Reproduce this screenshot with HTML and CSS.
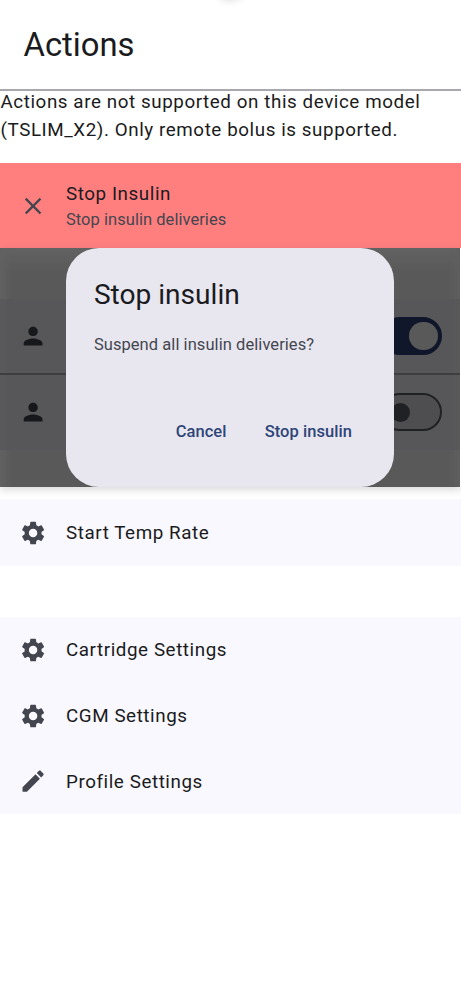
FILE: index.html
```html
<!DOCTYPE html>
<html lang="en">
<head>
<meta charset="utf-8">
<title>Actions</title>
<link rel="stylesheet" href="styles.css">
</head>
<body>
<svg class="defs" width="0" height="0">
  <symbol id="gear" viewBox="0 0 24 24"><path d="M19.14 12.94c.04-.3.06-.61.06-.94 0-.32-.02-.64-.07-.94l2.03-1.58c.18-.14.23-.41.12-.61l-1.92-3.32c-.12-.22-.37-.29-.59-.22l-2.39.96c-.5-.38-1.03-.7-1.62-.94l-.36-2.54c-.04-.24-.24-.41-.48-.41h-3.84c-.24 0-.43.17-.47.41l-.36 2.54c-.59.24-1.13.57-1.62.94l-2.39-.96c-.22-.08-.47 0-.59.22L2.74 8.87c-.12.21-.08.47.12.61l2.03 1.58c-.05.3-.09.63-.09.94s.02.64.07.94l-2.03 1.58c-.18.14-.23.41-.12.61l1.92 3.32c.12.22.37.29.59.22l2.39-.96c.5.38 1.03.7 1.62.94l.36 2.54c.05.24.24.41.48.41h3.84c.24 0 .44-.17.47-.41l.36-2.54c.59-.24 1.13-.56 1.62-.94l2.39.96c.22.08.47 0 .59-.22l1.92-3.32c.12-.22.07-.47-.12-.61l-2.01-1.58zM12 15.6c-1.98 0-3.6-1.62-3.6-3.6s1.62-3.6 3.6-3.6 3.6 1.62 3.6 3.6-1.62 3.6-3.6 3.6z"/></symbol>
  <symbol id="person" viewBox="0 0 24 24"><path d="M12 12c2.21 0 4-1.79 4-4s-1.79-4-4-4-4 1.79-4 4 1.79 4 4 4zm0 2c-2.67 0-8 1.34-8 4v2h16v-2c0-2.66-5.33-4-8-4z"/></symbol>
  <symbol id="close" viewBox="0 0 24 24"><path d="M19 6.41L17.59 5 12 10.59 6.41 5 5 6.41 10.59 12 5 17.59 6.41 19 12 13.41 17.59 19 19 17.59 13.41 12z"/></symbol>
  <symbol id="edit" viewBox="0 0 24 24"><path d="M3 17.25V21h3.75L17.81 9.94l-3.75-3.75L3 17.25zM20.71 7.04c.39-.39.39-1.02 0-1.41l-2.34-2.34c-.39-.39-1.02-.39-1.41 0l-1.83 1.83 3.75 3.75 1.83-1.83z"/></symbol>
</svg>
<main class="screen">
  <div class="indicator"></div>
  <header class="header"><h1>Actions</h1></header>
  <p class="notice">Actions are not supported on this device model (TSLIM_X2). Only remote bolus is supported.</p>
  <div class="item stop">
    <svg class="icon"><use href="#close"/></svg>
    <div><div class="label">Stop Insulin</div><div class="sub">Stop insulin deliveries</div></div>
  </div>
  <section class="modal">
    <div class="scrim">
      <div class="mode"><svg class="icon"><use href="#person"/></svg><span class="switch on"></span></div>
      <div class="mode"><svg class="icon"><use href="#person"/></svg><span class="switch"></span></div>
    </div>
    <div class="dialog">
      <h2>Stop insulin</h2>
      <p>Suspend all insulin deliveries?</p>
      <div class="buttons"><button>Cancel</button><button>Stop insulin</button></div>
    </div>
  </section>
  <div class="group first">
    <div class="item"><svg class="icon"><use href="#gear"/></svg><div class="label">Start Temp Rate</div></div>
  </div>
  <div class="group">
    <div class="item"><svg class="icon"><use href="#gear"/></svg><div class="label">Cartridge Settings</div></div>
    <div class="item"><svg class="icon"><use href="#gear"/></svg><div class="label">CGM Settings</div></div>
    <div class="item"><svg class="icon"><use href="#edit"/></svg><div class="label">Profile Settings</div></div>
  </div>
</main>
</body>
</html>
```
FILE: styles.css
```css
* { box-sizing: border-box; }
body { margin: 0; background: #fff; font-family: Roboto, sans-serif; color: #1a1b20; }
.defs { position: absolute; }
.screen { position: relative; width: 461px; height: 1000px; overflow: hidden; }
.indicator { position: absolute; left: 214px; top: -32px; width: 32px; height: 32px; border-radius: 50%; box-shadow: 0 0 8px rgba(0, 0, 0, .16); }
.header { height: 91px; padding-left: 23.5px; border-bottom: 2px solid #a9a8ae; }
h1 { margin: 0; font-size: 32.8px; font-weight: 400; line-height: 90px; }
.notice { margin: -3px 0 0; height: 75.4px; padding-left: .5px; font-size: 18.8px; line-height: 28.2px; letter-spacing: .58px; }
.item { display: flex; align-items: center; gap: 19px; height: 65.8px; padding-left: 18.8px; }
.icon { width: 28.2px; height: 28.2px; flex: none; fill: #44464f; }
.label { font-size: 18.8px; line-height: 28.2px; letter-spacing: .58px; }
.group .label { padding-top: 1px; }
.stop { height: 84.5px; background: #ff7f7f; }
.stop .label { padding-top: 1px; }
.sub { font-size: 16.5px; line-height: 23.5px; letter-spacing: .04px; color: #44464f; }
.modal { display: grid; position: relative; height: 239.5px; box-shadow: 0 3px 8px rgba(0, 0, 0, .15); }
.scrim { grid-area: 1 / 1; width: 460px; padding-top: 51px; background: linear-gradient(90deg, #616161, transparent 12px, transparent 448px, #5f5f5f), linear-gradient(#626262, #595959 24px); }
.mode { display: flex; align-items: center; justify-content: space-between; height: 74.3px; padding: 0 18px 0 18.8px; background: rgba(86, 86, 91, .65); }
.mode + .mode { height: 76.5px; border-top: 2px solid #3e3e41; }
.mode .icon { fill: #17181b; }
.switch { display: flex; align-items: center; width: 61px; height: 38px; padding: 0 8px; border: 2.4px solid #202124; border-radius: 19px; background: #4e4e51; }
.switch::before { content: ""; width: 19px; height: 19px; border-radius: 50%; background: #202124; }
.switch.on { justify-content: flex-end; padding: 0 2.4px; border-color: #10172a; background: #10172a; }
.switch.on::before { width: 28.2px; height: 28.2px; background: #595959; }
.dialog { grid-area: 1 / 1; width: 328.6px; height: 239.5px; margin-left: 65.7px; padding: 27.8px 28.2px; border-radius: 33px; background: #e8e6ef; }
h2 { margin: 0 0 19.4px; font-size: 28.1px; font-weight: 400; line-height: 37.6px; }
.dialog p { margin: 0; font-size: 16.5px; line-height: 23.5px; letter-spacing: .06px; color: #44464f; }
.buttons { display: flex; justify-content: flex-end; gap: 10px; margin-top: 52px; }
button { height: 47px; padding: 0 14.1px; border: 0; background: none; font: 500 16.5px/23.5px Roboto, sans-serif; letter-spacing: .05px; color: #2e4578; }
.group { margin-bottom: 51px; background: #f9f8ff; }
.first { padding-top: 12.8px; background: linear-gradient(transparent 12px, #f9f8ff 12px); }
```
